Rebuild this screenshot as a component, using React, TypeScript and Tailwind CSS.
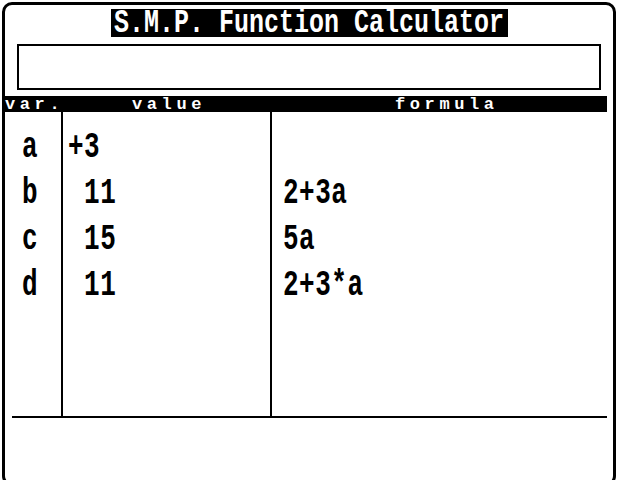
const rows = [
  { name: "a", value: "+3", formula: "" },
  { name: "b", value: " 11", formula: "2+3a" },
  { name: "c", value: " 15", formula: "5a" },
  { name: "d", value: " 11", formula: "2+3*a" },
];

// tall narrow screen font: monospace stretched upward
const mono = { fontFamily: '"Liberation Mono", "DejaVu Sans Mono", monospace' };

function Cell({ text }: { text: string }) {
  return (
    <div className="h-[46px] flex items-center">
      <span
        className="inline-block whitespace-pre text-[26px] font-bold leading-none tracking-[0.5px] scale-y-[1.4] origin-center"
        style={mono}
      >
        {text}
      </span>
    </div>
  );
}

export default function App() {
  return (
    <div className="w-[618px] h-[480px] bg-white overflow-hidden pt-[2px] px-[2px]">
      <div className="h-[484px] border-[3px] border-black rounded-[10px] flex flex-col">
        {/* title */}
        <div className="flex justify-center pt-[4px]">
          <div className="bg-black text-white h-[28px] w-[397px] flex items-center justify-center">
            <span
              className="inline-block whitespace-pre text-[25px] font-bold leading-none scale-y-[1.35] origin-center"
              style={mono}
            >
              S.M.P. Function Calculator
            </span>
          </div>
        </div>

        {/* entry line */}
        <div className="mx-[12px] mt-[7px] h-[46px] border-2 border-black" />

        {/* column header */}
        <div
          className="mt-[6px] mr-[6px] h-[16px] bg-black text-white flex items-center text-[17px] font-bold leading-none tracking-[4.6px]"
          style={mono}
        >
          <span className="w-[56px]">var.</span>
          <span className="w-[209px] pl-[71px]">value</span>
          <span className="flex-1 pl-[125px]">formula</span>
        </div>

        {/* variable table */}
        <div className="flex h-[304px] mr-[6px]">
          <div className="w-[58px] border-r-2 border-black flex flex-col items-center pt-[12px] pr-[6px]">
            {rows.map((r) => (
              <Cell key={r.name} text={r.name} />
            ))}
          </div>
          <div className="w-[209px] border-r-2 border-black flex flex-col pt-[12px] pl-[5px]">
            {rows.map((r) => (
              <Cell key={r.name} text={r.value} />
            ))}
          </div>
          <div className="flex-1 flex flex-col pt-[12px] pl-[11px]">
            {rows.map((r) => (
              <Cell key={r.name} text={r.formula} />
            ))}
          </div>
        </div>
        <div className="h-[2px] bg-black ml-[7px] mr-[6px]" />
      </div>
    </div>
  );
}
